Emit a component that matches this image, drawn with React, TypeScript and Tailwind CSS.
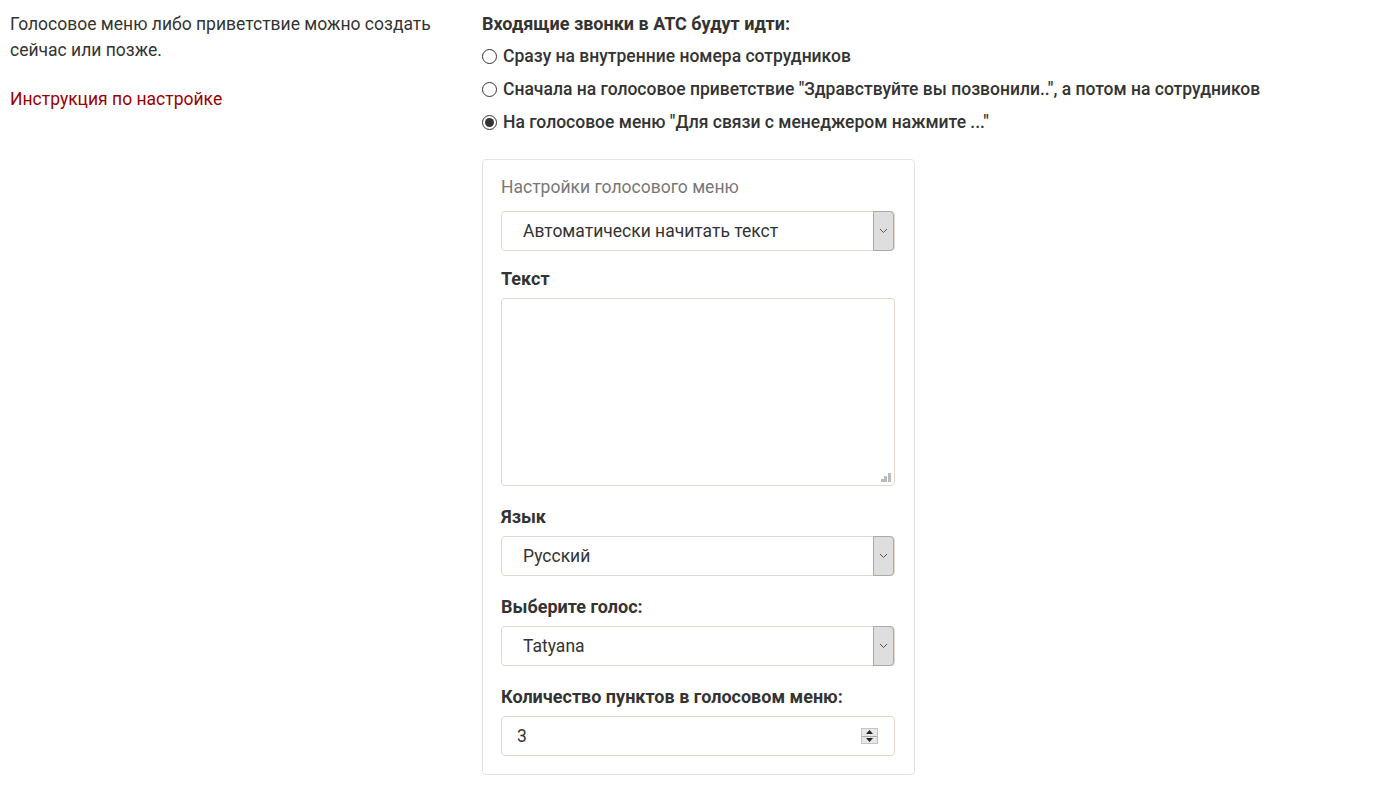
const options = [
  { label: 'Сразу на внутренние номера сотрудников', checked: false },
  {
    label: 'Сначала на голосовое приветствие "Здравствуйте вы позвонили..", а потом на сотрудников',
    checked: false,
  },
  { label: 'На голосовое меню "Для связи с менеджером нажмите ..."', checked: true },
];

function Radio({ checked }: { checked: boolean }) {
  return (
    <span className="mr-[6px] flex h-[15px] w-[15px] shrink-0 items-center justify-center rounded-full border border-[#333] bg-white">
      {checked && <span className="h-[9px] w-[9px] rounded-full bg-[#333]" />}
    </span>
  );
}

function SelectBox({ value }: { value: string }) {
  return (
    <div className="flex h-[40px] items-stretch rounded-[4px] border border-[#e0d8cc] bg-white">
      <span className="flex flex-1 items-center pl-[21px] text-[17.5px] text-[#333]">{value}</span>
      <span className="my-[-1px] flex w-[21px] items-center justify-center rounded-r-[4px] border border-[#a9a9a9] bg-[#dedede]">
        <svg width="9" height="6" viewBox="0 0 9 6">
          <path d="M1 1l3.5 3.5L8 1" fill="none" stroke="#555" strokeWidth="1" />
        </svg>
      </span>
    </div>
  );
}

function Label({ children }: { children: string }) {
  return <div className="mb-[9px] text-[18px] font-bold leading-[20px] text-[#333]">{children}</div>;
}

export default function App() {
  return (
    <div className="flex bg-white pt-[11px] font-['Roboto',sans-serif] text-[17.5px] text-[#333]">
      <div className="w-[482px] shrink-0 pl-[10px]">
        <p className="w-[440px] leading-[26px]">
          Голосовое меню либо приветствие можно создать сейчас или позже.
        </p>
        <a href="#" className="mt-[23px] block leading-[26px] text-[#990000]">
          Инструкция по настройке
        </a>
      </div>

      <div className="mt-[2px] flex-1">
        <div className="text-[18px] font-bold leading-[22px]">Входящие звонки в АТС будут идти:</div>
        <div className="mt-[11px] flex flex-col gap-[13px]">
          {options.map((o) => (
            <label key={o.label} className="flex items-center font-medium leading-[20px]">
              <Radio checked={o.checked} />
              {o.label}
            </label>
          ))}
        </div>

        <div className="mt-[27px] w-[433px] rounded-[4px] border border-[#e3e3e3] pb-[18px] pl-[18px] pr-[19px] pt-[16px]">
          <div className="mb-[13px] leading-[22px] text-[#777]">Настройки голосового меню</div>
          <SelectBox value="Автоматически начитать текст" />

          <div className="mt-[18px]">
            <Label>Текст</Label>
            <div className="relative h-[188px] rounded-[4px] border border-[#e0d8cc] bg-white">
              <svg className="absolute bottom-[2px] right-[2px]" width="11" height="11" viewBox="0 0 11 11">
                <rect x="7" y="1" width="3" height="3" fill="#bbb" />
                <rect x="3" y="4" width="3" height="3" fill="#bbb" />
                <rect x="7" y="4" width="3" height="3" fill="#bbb" />
                <rect x="0" y="7" width="3" height="3" fill="#bbb" />
                <rect x="3" y="7" width="3" height="3" fill="#bbb" />
                <rect x="7" y="7" width="3" height="3" fill="#bbb" />
              </svg>
            </div>
          </div>

          <div className="mt-[21px]">
            <Label>Язык</Label>
            <SelectBox value="Русский" />
          </div>

          <div className="mt-[21px]">
            <Label>Выберите голос:</Label>
            <SelectBox value="Tatyana" />
          </div>

          <div className="mt-[21px]">
            <Label>Количество пунктов в голосовом меню:</Label>
            <div className="flex h-[40px] items-center rounded-[4px] border border-[#e0d8cc] bg-white pl-[15px] pr-[16px]">
              <span className="flex-1">3</span>
              <span className="flex h-[16px] w-[17px] flex-col border border-[#c4c4c4] bg-[#e8e8e8]">
                <span className="flex flex-1 items-center justify-center border-b border-[#aaa]">
                  <svg width="7" height="4" viewBox="0 0 7 4">
                    <path d="M0 4L3.5 0L7 4z" fill="#222" />
                  </svg>
                </span>
                <span className="flex flex-1 items-center justify-center">
                  <svg width="7" height="4" viewBox="0 0 7 4">
                    <path d="M0 0L3.5 4L7 0z" fill="#222" />
                  </svg>
                </span>
              </span>
            </div>
          </div>
        </div>
      </div>
    </div>
  );
}
